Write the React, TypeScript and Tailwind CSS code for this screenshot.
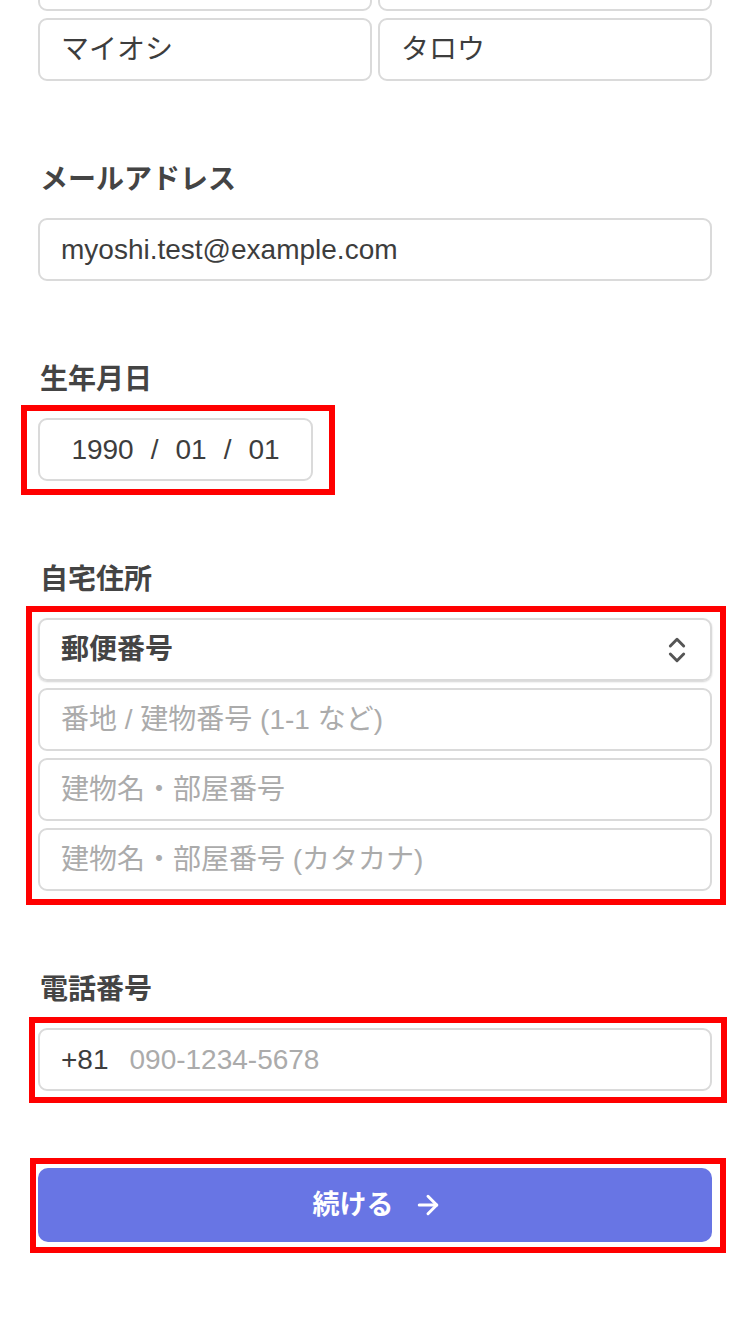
import { ArrowRight, ChevronsUpDown } from 'lucide-react';

type FieldProps = {
  value?: string;
  placeholder?: string;
};

// Plain text box used across the form
function TextBox({ value, placeholder }: FieldProps) {
  return (
    <div className="flex h-[63px] items-center rounded-[9px] border-2 border-[#dadada] bg-white px-[21px] text-[28px] leading-none">
      {value ? (
        <span className="text-[#3d3d3d]">{value}</span>
      ) : (
        <span className="text-[#ababab]">{placeholder}</span>
      )}
    </div>
  );
}

function Label({ children }: { children: React.ReactNode }) {
  return (
    <div className="mb-[20px] h-[36px] px-[2px] text-[28px] font-bold leading-[36px] text-[#444444]">
      {children}
    </div>
  );
}

// Red annotation frame drawn over a field
function Mark({ className }: { className: string }) {
  return <div className={`pointer-events-none absolute border-[6px] border-[#ff0000] ${className}`} />;
}

export default function App() {
  return (
    <div className="min-h-screen overflow-hidden bg-white px-[38px] font-['Liberation_Sans','Noto_Sans_CJK_JP',sans-serif]">
      {/* name rows, the first one scrolled out of view */}
      <div className="-mt-[52px] grid grid-cols-2 gap-x-[6px] gap-y-[7px]">
        <TextBox placeholder="" />
        <TextBox placeholder="" />
        <TextBox value="マイオシ" />
        <TextBox value="タロウ" />
      </div>

      <div className="mt-[81px]">
        <Label>メールアドレス</Label>
        <TextBox value="myoshi.test@example.com" />
      </div>

      <div className="mt-[81px]">
        <Label>生年月日</Label>
        <div className="relative w-[275px]">
          <div className="flex h-[63px] items-center justify-center gap-[17px] rounded-[9px] border-2 border-[#dadada] text-[28px] leading-none text-[#3d3d3d]">
            <span>1990</span>
            <span>/</span>
            <span>01</span>
            <span>/</span>
            <span>01</span>
          </div>
          <Mark className="-top-[13px] -right-[22px] -bottom-[14px] -left-[17px]" />
        </div>
      </div>

      <div className="mt-[81px]">
        <Label>自宅住所</Label>
        <div className="relative flex flex-col gap-[7px]">
          <div className="flex h-[63px] items-center justify-between rounded-[9px] border-2 border-[#dadada] px-[21px] shadow-[0_1px_2px_rgba(0,0,0,0.18)]">
            <span className="text-[28px] font-bold leading-none text-[#444444]">郵便番号</span>
            <ChevronsUpDown className="-mr-[4px] h-[32px] w-[32px] text-[#555555]" strokeWidth={2.2} />
          </div>
          <TextBox placeholder="番地 / 建物番号 (1-1 など)" />
          <TextBox placeholder="建物名・部屋番号" />
          <TextBox placeholder="建物名・部屋番号 (カタカナ)" />
          <Mark className="-top-[12px] -right-[14px] -bottom-[14px] -left-[12px]" />
        </div>
      </div>

      <div className="mt-[81px]">
        <Label>電話番号</Label>
        <div className="relative">
          <div className="flex h-[63px] items-center rounded-[9px] border-2 border-[#dadada] px-[21px] text-[28px] leading-none">
            <span className="text-[#3d3d3d]">+81</span>
            <span className="ml-[21px] text-[#ababab]">090-1234-5678</span>
          </div>
          <Mark className="-top-[11px] -right-[15px] -bottom-[12px] -left-[9px]" />
        </div>
      </div>

      <div className="relative mt-[77px]">
        <button className="flex h-[74px] w-full items-center justify-center gap-[19px] rounded-[10px] bg-[#6875e4] pl-[5px] text-[27px] font-bold leading-none text-white">
          <span>続ける</span>
          <ArrowRight className="h-[30px] w-[30px]" strokeWidth={2.4} />
        </button>
        <Mark className="-top-[10px] -right-[14px] -bottom-[11px] -left-[8px]" />
      </div>
    </div>
  );
}
